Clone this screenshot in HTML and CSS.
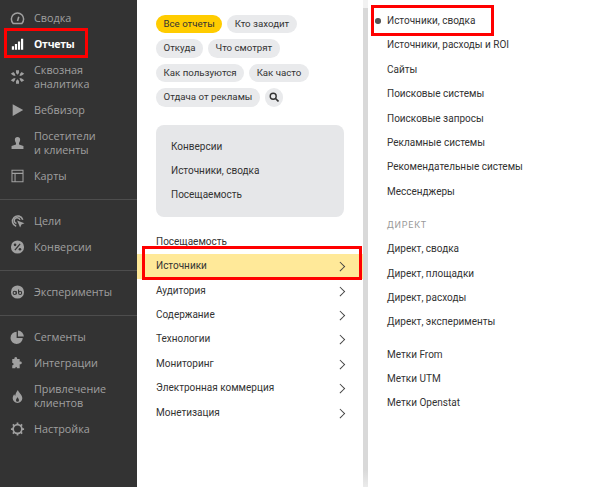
FILE: index.html
```html
<!DOCTYPE html>
<html lang="ru">
<head>
<meta charset="utf-8">
<title>Отчеты</title>
<link rel="stylesheet" href="styles.css">
</head>
<body>
<div class="app">
  <nav class="side">
    <div class="group">
      <a class="item"><svg class="ic" viewBox="0 0 16 16"><path d="M3 14.200a7 7 0 1 1 10 0z" fill="none" stroke="currentColor" stroke-width="1.700"/><path d="M8 11.500 9.500 6.500" stroke="currentColor" stroke-width="1.800"/></svg><span>Сводка</span></a>
      <a class="item active"><svg class="ic" viewBox="0 0 16 16"><path d="M1.500 10.500h2.500v4H1.500zM5 8h2.500v6.500H5zM8.500 5h2.500v9.500H8.500zM12 2h2.500v12.500H12z" fill="currentColor"/></svg><span>Отчеты</span></a>
      <a class="item"><svg class="ic" viewBox="0 0 16 16"><g fill="currentColor"><path d="M6.300 .2h3.400L9.700 3.500 8 5.400 6.300 3.500z"/><path d="M6.300 15.800h3.400L9.700 12.500 8 10.600 6.300 12.500z"/><path d="M.3 4.300 3.300 2.400 5 4.400 5.700 6.900 3.100 6.400z"/><path d="M15.700 4.300 12.700 2.400 11 4.400 10.300 6.900 12.900 6.400z"/><path d="M.3 11.700 3.300 13.600 5 11.600 5.700 9.100 3.100 9.600z"/><path d="M15.700 11.700 12.700 13.600 11 11.600 10.300 9.100 12.900 9.600z"/></g></svg><span>Сквозная<br>аналитика</span></a>
      <a class="item"><svg class="ic" viewBox="0 0 16 16"><path d="M2.500 1.500 14.500 8 2.500 14.800z" fill="currentColor"/></svg><span>Вебвизор</span></a>
      <a class="item"><svg class="ic" viewBox="0 0 16 16"><path d="M5 4.200a3 3 0 0 1 6 0c0 2-1 3-1.300 4v1.600L14.800 11.500v3.300H1.200v-3.300L6.300 9.800V8.200C6 7.200 5 6.200 5 4.200z" fill="currentColor"/></svg><span>Посетители<br>и клиенты</span></a>
      <a class="item"><svg class="ic" viewBox="0 0 16 16"><path d="M1.700 1.500h12.600v13H1.700zM1.700 5h12.600M5.200 5v9.500" fill="none" stroke="currentColor" stroke-width="1.200"/></svg><span>Карты</span></a>
    </div>
    <div class="group">
      <a class="item"><svg class="ic" viewBox="0 0 16 16"><path d="M14 6.500A6 6 0 1 0 6.500 14" fill="none" stroke="currentColor" stroke-width="1.800"/><path d="M10.800 6.800A3.300 3.300 0 1 0 6.800 10.800" fill="none" stroke="currentColor" stroke-width="1.600"/><path d="M7.500 7.500 16 10.500l-3.500 1.500-1.500 3.500z" fill="currentColor"/></svg><span>Цели</span></a>
      <a class="item"><svg class="ic" viewBox="0 0 16 16"><circle cx="8" cy="8" r="7.500" fill="currentColor"/><path d="M5 11.500l6-7" stroke="#333" stroke-width="1.500"/><circle cx="5.200" cy="5.500" r="1.500" fill="#333"/><circle cx="10.800" cy="10.500" r="1.500" fill="#333"/></svg><span>Конверсии</span></a>
    </div>
    <div class="group">
      <a class="item"><svg class="ic" viewBox="0 0 16 16"><circle cx="8" cy="8" r="7.500" fill="currentColor"/><circle cx="4.800" cy="9" r="1.800" fill="none" stroke="#333" stroke-width="1.200"/><circle cx="11" cy="9" r="1.800" fill="none" stroke="#333" stroke-width="1.200"/><path d="M9.200 5v4M6.600 7v3.500" stroke="#333" stroke-width="1.200"/></svg><span>Эксперименты</span></a>
    </div>
    <div class="group last">
      <a class="item"><svg class="ic" viewBox="0 0 16 16"><path d="M7 2V9h7A7 7 0 1 1 7 2z" fill="currentColor"/><path d="M8.500 .7A7 7 0 0 1 15.300 7.500H8.500z" fill="currentColor"/></svg><span>Сегменты</span></a>
      <a class="item"><svg class="ic" viewBox="0 0 16 16"><path d="M2 3.500h2.500C3.500 .2 8.500 .2 7.500 3.500H10.500v3c3-1 3.500 3.500 0 3V14H7c1-2-1.500-2-1.500 0H2v-3.500c2 .5 2-3 0-2.500z" fill="currentColor"/></svg><span>Интеграции</span></a>
      <a class="item"><svg class="ic" viewBox="0 0 16 16"><path d="M8.500 1c.5 3 5 5 5 9.500a5.500 5.500 0 0 1-11 0c0-2 1-3.500 1.700-4.500.3 1 .7 1.500 1.300 1.800C5.500 5 7 3 8.500 1zM8 9.500c-1 1.300-1.700 2.500-1.700 3.500a1.700 1.700 0 0 0 3.400 0C9.700 12 9 10.800 8 9.500z" fill="currentColor" fill-rule="evenodd"/></svg><span>Привлечение<br>клиентов</span></a>
      <a class="item"><svg class="ic" viewBox="0 0 16 16"><circle cx="8" cy="8" r="5" fill="none" stroke="currentColor" stroke-width="2"/><path d="M8 .5v3M8 12.500v3M.5 8h3M12.500 8h3M2.700 2.700l2 2M11.300 11.300l2 2M13.300 2.700l-2 2M4.700 11.300l-2 2" stroke="currentColor" stroke-width="2"/></svg><span>Настройка</span></a>
    </div>
  </nav>
  <section class="middle">
    <div class="chips">
      <span class="chip on">Все отчеты</span><span class="chip">Кто заходит</span>
      <span class="chip">Откуда</span><span class="chip">Что смотрят</span>
      <span class="chip">Как пользуются</span><span class="chip">Как часто</span>
      <span class="chip">Отдача от рекламы</span><span class="chip round"><svg class="search" viewBox="0 0 10 10"><circle cx="4.200" cy="4.200" r="3" fill="none" stroke="#333" stroke-width="1.400"/><path d="M6.500 6.500 9.500 9.500" stroke="#333" stroke-width="1.600"/></svg></span>
    </div>
    <div class="fav">
      <a>Конверсии</a>
      <a>Источники, сводка</a>
      <a>Посещаемость</a>
    </div>
    <ul class="tree">
      <li>Посещаемость</li>
      <li class="sel">Источники<i class="chev"></i></li>
      <li>Аудитория<i class="chev"></i></li>
      <li>Содержание<i class="chev"></i></li>
      <li>Технологии<i class="chev"></i></li>
      <li>Мониторинг<i class="chev"></i></li>
      <li>Электронная коммерция<i class="chev"></i></li>
      <li>Монетизация<i class="chev"></i></li>
    </ul>
    <div class="mark mark-tree"></div>
  </section>
  <div class="rule"></div>
  <section class="right">
    <ul class="links">
      <li class="cur">Источники, сводка</li>
      <li>Источники, расходы и ROI</li>
      <li>Сайты</li>
      <li>Поисковые системы</li>
      <li>Поисковые запросы</li>
      <li>Рекламные системы</li>
      <li>Рекомендательные системы</li>
      <li>Мессенджеры</li>
    </ul>
    <div class="head">ДИРЕКТ</div>
    <ul class="links">
      <li>Директ, сводка</li>
      <li>Директ, площадки</li>
      <li>Директ, расходы</li>
      <li>Директ, эксперименты</li>
    </ul>
    <ul class="links second">
      <li>Метки From</li>
      <li>Метки UTM</li>
      <li>Метки Openstat</li>
    </ul>
    <div class="mark mark-right"></div>
  </section>
  <div class="mark mark-side"></div>
</div>
</body>
</html>
```
FILE: styles.css
```css
* { box-sizing: border-box; }
html, body { margin: 0; height: 100%; overflow: hidden; }
body { font-family: Roboto, "Noto Sans", sans-serif; background: #fff; }
ul { list-style: none; margin: 0; padding: 0; }
.app { position: relative; display: flex; width: 600px; height: 487px; }

.side { width: 137px; flex: none; background: #333; color: #a0a0a0; font-family: "Open Sans", sans-serif; font-size: 10.800px; line-height: 14px; padding-top: 5px; }
.group { padding-bottom: 10px; margin-bottom: 8px; border-bottom: 1px solid #4d4d4d; }
.group.last { border: 0; }
.item { display: flex; align-items: center; gap: 9px; padding: 6px 0 6px 10px; min-height: 26px; }
.item.active { color: #fff; font-size: 10.500px; font-weight: 700; letter-spacing: -.25px; }
.ic { width: 15px; height: 14px; flex: none; }

.middle { position: relative; width: 226px; flex: none; padding: 14.500px 0 0 19px; font-size: 10px; color: #333; }
.chips { display: flex; flex-wrap: wrap; gap: 6px 5px; width: 190px; font-size: 9.700px; }
.chip { height: 18.500px; padding: 0 7.500px; border-radius: 9.250px; background: #e9eaec; line-height: 18.500px; white-space: nowrap; }
.chip.on { background: #fc0; }
.chip.round { width: 18.500px; padding: 0; display: flex; align-items: center; justify-content: center; }
.search { width: 10px; height: 10px; }
.fav { width: 188px; height: 92px; margin-top: 18.500px; padding: 9.500px 15px; background: #e6e7e9; border-radius: 8px; display: flex; flex-direction: column; }
.fav a { height: 24.500px; line-height: 24px; }
.tree { margin: 12.800px 0 0 -19px; }
.tree li { position: relative; height: 24.400px; padding-left: 19px; line-height: 24.400px; }
.tree .sel { background: #ffe999; }
.chev { position: absolute; right: 20px; top: 9px; width: 6.500px; height: 6.500px; border-top: 1px solid #444; border-right: 1px solid #444; transform: rotate(45deg); }

.rule { width: 5px; flex: none; background: linear-gradient(#f2f2f2 8px, #d9d9d9 8px, #d9d9d9 470px, #ebebeb); }

.right { position: relative; flex: 1; padding: 9px 0 0 19px; font-size: 10px; color: #333; }
.links li { position: relative; height: 24.400px; line-height: 24px; }
.cur::before { content: ""; position: absolute; left: -12px; top: 9px; width: 5.500px; height: 5.500px; border-radius: 50%; background: #555; }
.head { margin-top: 12px; height: 21px; font-size: 9px; letter-spacing: .8px; color: #999; line-height: 18px; }
.second { margin-top: 8px; }

.mark { position: absolute; border: 3px solid #f00; pointer-events: none; }
.mark-side { left: 4px; top: 28px; width: 84px; height: 30px; }
.mark-tree { left: 4.500px; top: 245.500px; width: 220px; height: 34px; }
.mark-right { left: 3px; top: 5px; width: 123px; height: 31px; }
```
